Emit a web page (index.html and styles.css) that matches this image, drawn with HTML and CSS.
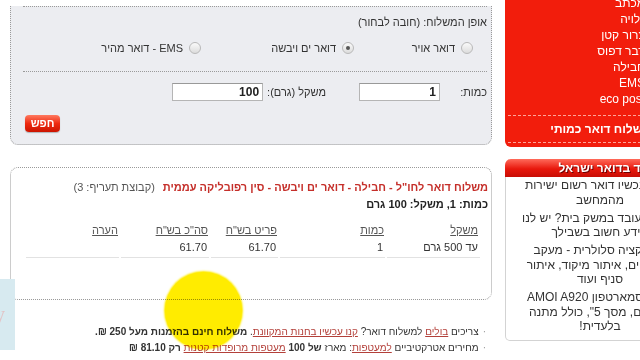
FILE: index.html
```html
<!DOCTYPE html>
<html lang="he">
<head>
<meta charset="utf-8">
<title>מחשבון משלוח</title>
<link rel="stylesheet" href="styles.css">
</head>
<body>
<div class="page">
  <aside class="sidebar">
    <div class="redbox">
      <ul class="menu">
        <li>מכתב</li>
        <li>גלויה</li>
        <li>צרור קטן</li>
        <li>דבר דפוס</li>
        <li>חבילה</li>
        <li>EMS</li>
        <li>eco post</li>
      </ul>
      <div class="bulk">משלוח דואר כמותי</div>
    </div>
    <div class="more">
      <div class="more-head">עוד בדואר ישראל</div>
      <div class="more-body">
        <p>שלחו עכשיו דואר רשום ישירות מהמחשב</p>
        <p>מעסיק עובד במשק בית? יש לנו מידע חשוב בשבילך</p>
        <p>אפליקציה סלולרית - מעקב משלוחים, איתור מיקוד, איתור סניף ועוד</p>
        <p>חדש! סמארטפון AMOI A920 מתקדם, מסך 5", כולל מתנה בלעדית!</p>
      </div>
    </div>
  </aside>

  <main class="main">
    <form class="calc">
      <div class="calc-sec">
        <div class="calc-label">אופן המשלוח: (חובה לבחור)</div>
        <div class="radios">
          <label class="opt opt-air"><span class="radio"></span>דואר אויר</label>
          <label class="opt opt-sea"><span class="radio on"></span>דואר ים ויבשה</label>
          <label class="opt"><span class="radio"></span>EMS - דואר מהיר</label>
        </div>
      </div>
      <div class="calc-sec">
        <div class="fields">
          <span class="f-label f-qty">כמות:</span>
          <span class="input in-qty">1</span>
          <span class="f-label f-weight">משקל (גרם):</span>
          <span class="input in-weight">100</span>
        </div>
        <div class="actions"><span class="btn">חפש</span></div>
      </div>
    </form>

    <section class="result">
      <div class="res-title"><span class="res-name">משלוח דואר לחו"ל - חבילה - דואר ים ויבשה - סין רפובליקה עממית</span><span class="res-group">(קבוצת תעריף: 3)</span></div>
      <div class="res-sum">כמות: 1, משקל: 100 גרם</div>
      <table class="rates">
        <colgroup>
          <col class="c1"><col class="c2"><col class="c3"><col class="c4"><col class="c5">
        </colgroup>
        <thead>
          <tr><th><u>משקל</u></th><th><u>כמות</u></th><th><u>פריט בש"ח</u></th><th><u>סה"כ בש"ח</u></th><th><u>הערה</u></th></tr>
        </thead>
        <tbody>
          <tr><td>עד 500 גרם</td><td>1</td><td>61.70</td><td>61.70</td><td></td></tr>
        </tbody>
      </table>
    </section>

    <ul class="notes">
      <li>צריכים <a href="#">בולים</a> למשלוח דואר? <a href="#">קנו עכשיו בחנות המקוונת</a>. <b>משלוח חינם בהזמנות מעל 250 ₪.</b></li>
      <li>מחירים אטרקטיביים <a href="#">למעטפות</a>: מארז <b>של 100</b> <a href="#">מעטפות מרופדות קטנות</a> <b>רק 81.10 ₪</b></li>
    </ul>
  </main>
</div>
<div class="ad">y</div>
<div class="cursor-dot"></div>
</body>
</html>
```

FILE: styles.css
```css
* { box-sizing: border-box; }
html, body {
  margin: 0;
  padding: 0;
  background: #fff;
  overflow: hidden;
}
body {
  width: 640px;
  height: 360px;
  position: relative;
  font-family: "Liberation Sans", Arial, "DejaVu Sans", sans-serif;
  font-size: 11px;
  color: #333;
}

.page {
  display: flex;
  direction: rtl;
  gap: 13px;
  width: 640px;
  height: 360px;
  overflow: hidden;
}

/* ---------- sidebar ---------- */
.sidebar {
  flex: 0 0 135px;
}
.redbox {
  margin-top: -5px;
  margin-right: -5px;
  background: #f21d0c;
  color: #fff;
  border-bottom-left-radius: 6px;
  padding: 0 0 4px 3px;
  font-size: 12px;
}
.menu {
  list-style: none;
  margin: 0;
  padding: 0;
  line-height: 16px;
}
.bulk {
  margin-top: 8px;
  margin-right: -6px;
  border-top: 1px dashed rgba(255, 200, 190, 0.8);
  border-bottom: 1px dashed rgba(255, 200, 190, 0.8);
  padding: 5px 0 5px;
  line-height: 16px;
  font-weight: bold;
}
.more {
  margin-top: 12px;
  margin-right: -55px;
}
.more-head {
  height: 18px;
  line-height: 18px;
  background: linear-gradient(#ff6a5a, #e8180c 55%, #c80d05);
  border-top-left-radius: 6px;
  color: #fff;
  font-size: 12px;
  font-weight: bold;
  text-align: center;
  text-shadow: 1px 1px 0 #6a0000;
  padding-left: 10px;
}
.more-body {
  border: 1px solid #d3d3d3;
  border-top: none;
  border-bottom-left-radius: 5px;
  padding: 1px 8px 3px;
  text-align: center;
  font-size: 12px;
  line-height: 14.5px;
  color: #333;
}
.more-body p {
  margin: 0 0 3.5px;
}

/* ---------- main ---------- */
.main {
  flex: 0 0 481px;
}
.calc {
  margin: 0;
  background: #ecedf1;
  border: 1px dotted #9a9a9a;
  border-top: none;
  border-radius: 0 0 8px 8px;
  padding: 0 4px 12px 12px;
}
.calc-sec {
  border-top: 1px dotted #9a9a9a;
  margin-top: 15px;
}
.calc-sec:first-child {
  margin-top: 6px;
}
.calc-label {
  margin-top: 7px;
  line-height: 16px;
  color: #333;
}
.radios {
  display: flex;
  margin: 10px 14px 0 0;
  height: 16px;
  line-height: 16px;
  color: #333;
}
.opt {
  display: flex;
  align-items: center;
  gap: 6px;
}
.opt-air { flex: 0 0 119px; }
.opt-sea { flex: 0 0 153px; }
.radio {
  width: 12px;
  height: 12px;
  border-radius: 50%;
  border: 1px solid #b9b9b9;
  background: linear-gradient(#fafafa, #dcdcdc);
  display: flex;
  align-items: center;
  justify-content: center;
}
.radio.on::after {
  content: "";
  width: 4px;
  height: 4px;
  border-radius: 50%;
  background: #555;
}
.fields {
  display: flex;
  align-items: center;
  margin-top: 11px;
  height: 18px;
  line-height: 18px;
}
.f-qty {
  flex: 0 0 47px;
}
.f-weight {
  margin-right: 33px;
  margin-left: 4px;
}
.input {
  height: 18px;
  background: #fff;
  border: 1px solid #b5b5b5;
  border-top-color: #999;
  line-height: 16px;
  padding: 0 3px;
  font-size: 12px;
  font-weight: bold;
  color: #222;
}
.in-qty { flex: 0 0 81px; }
.in-weight { flex: 0 0 91px; }
.actions {
  display: flex;
  justify-content: flex-end;
  margin-top: 14px;
}
.btn {
  width: 35px;
  height: 17px;
  margin-left: 2px;
  border-radius: 4px;
  background: linear-gradient(#ff7a60, #ee2a10 50%, #cc1400);
  box-shadow: 0 1px 1px rgba(0, 0, 0, 0.25);
  color: #fff;
  font-weight: bold;
  font-size: 11px;
  line-height: 17px;
  text-align: center;
}

.result {
  margin-top: 22px;
  border: 1px dotted #9a9a9a;
  border-radius: 8px;
  padding: 12px 3px 41px 12px;
}
.res-title {
  line-height: 15px;
  font-weight: bold;
  white-space: nowrap;
}
.res-name {
  color: #c52f2a;
}
.res-group {
  font-weight: normal;
  color: #555;
  margin-right: 8px;
}
.res-sum {
  margin-top: 2px;
  line-height: 15px;
  font-weight: bold;
  color: #222;
}
.rates {
  margin: 11px 8px 0 1px;
  width: 455px;
  border-collapse: collapse;
  table-layout: fixed;
}
.rates .c1 { width: 94px; }
.rates .c2 { width: 107px; }
.rates .c3 { width: 69px; }
.rates .c4 { width: 90px; }
.rates .c5 { width: 95px; }
.rates th {
  font-weight: normal;
  color: #555;
  text-align: right;
  padding: 0 2px 0 0;
  line-height: 15px;
}
.rates td {
  text-align: right;
  padding: 2px 2px 2px 0;
  line-height: 15px;
  color: #333;
  border-bottom: 1px solid #e2e2e2;
  border-left: 2px solid #fff;
}

.notes {
  list-style: none;
  margin: 24px 0 0;
  padding: 0 6px 0 0;
  font-size: 10px;
  line-height: 16px;
  color: #333;
  white-space: nowrap;
}
.notes li::before {
  content: "·";
  color: #999;
  margin-left: 4px;
}
.notes a {
  color: #b3403a;
  text-decoration: underline;
}
.notes b {
  color: #333;
}

/* ---------- overlays ---------- */
.ad {
  position: absolute;
  left: 0;
  top: 279px;
  width: 15px;
  height: 71px;
  background: #d7eaf0;
  color: #e2c3c6;
  font-family: "Liberation Serif", serif;
  font-size: 20px;
  line-height: 71px;
  text-indent: -5px;
  overflow: hidden;
}
.cursor-dot {
  position: absolute;
  left: 165px;
  top: 272px;
  width: 77px;
  height: 77px;
  border-radius: 50%;
  background: #ffec00;
  box-shadow: 0 0 2px 1px #ffec00;
  mix-blend-mode: multiply;
}
```
